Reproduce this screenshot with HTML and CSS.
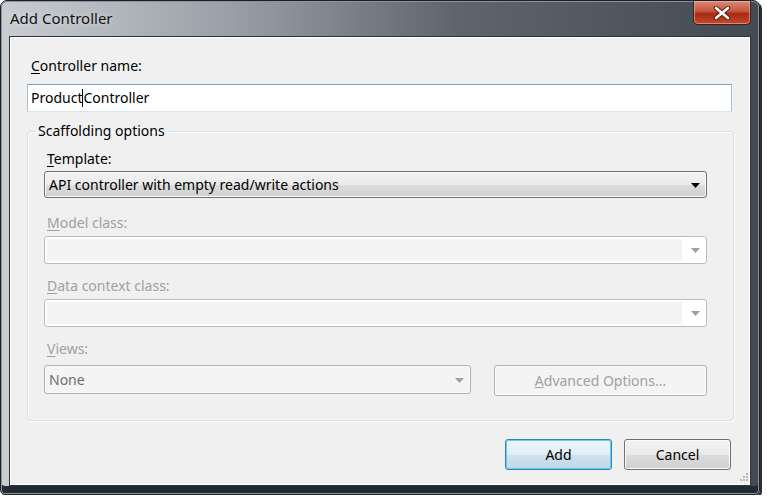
FILE: index.html
```html
<!DOCTYPE html>
<html>
<head>
<meta charset="utf-8">
<link rel="stylesheet" href="styles.css">
</head>
<body>
<div class="window">
  <div class="titlebar">
    <span class="title">Add Controller</span>
    <div class="close">
      <svg width="20" height="14" viewBox="0 0 20 14"><path d="M4 2 L16 12 M16 2 L4 12" stroke="#5a1a10" stroke-width="4.5" stroke-linecap="round"/><path d="M4 2 L16 12 M16 2 L4 12" stroke="#fff" stroke-width="2.6" stroke-linecap="round"/></svg>
    </div>
  </div>
  <div class="client">
    <label class="lbl name-lbl"><u>C</u>ontroller name:</label>
    <div class="textbox">Product<span class="caret"></span>Controller</div>
    <fieldset class="group">
      <legend>Scaffolding options</legend>
      <label class="lbl"><u>T</u>emplate:</label>
      <div class="combo active">
        <span>API controller with empty read/write actions</span>
        <svg class="arrow" width="9" height="5" viewBox="0 0 9 5"><path d="M0 0 H9 L4.5 5 Z" fill="#000"/></svg>
      </div>
      <label class="lbl dis"><u>M</u>odel class:</label>
      <div class="combo disabled">
        <span class="fill"></span>
        <svg class="arrow" width="9" height="5" viewBox="0 0 9 5"><path d="M0 0 H9 L4.5 5 Z" fill="#a0a0a0"/></svg>
      </div>
      <label class="lbl dis"><u>D</u>ata context class:</label>
      <div class="combo disabled">
        <span class="fill"></span>
        <svg class="arrow" width="9" height="5" viewBox="0 0 9 5"><path d="M0 0 H9 L4.5 5 Z" fill="#a0a0a0"/></svg>
      </div>
      <label class="lbl dis"><u>V</u>iews:</label>
      <div class="views-row">
        <div class="combo views">
          <span>None</span>
          <svg class="arrow" width="9" height="5" viewBox="0 0 9 5"><path d="M0 0 H9 L4.5 5 Z" fill="#a0a0a0"/></svg>
        </div>
        <div class="btn adv"><u>A</u>dvanced Options...</div>
      </div>
    </fieldset>
    <div class="buttons">
      <div class="btn primary">Add</div>
      <div class="btn">Cancel</div>
    </div>
    <div class="grip">
      <svg width="10" height="10" viewBox="0 0 10 10" fill="#b8b8b8"><rect x="8" y="0" width="2" height="2"/><rect x="5" y="3" width="2" height="2"/><rect x="8" y="3" width="2" height="2"/><rect x="2" y="6" width="2" height="2"/><rect x="5" y="6" width="2" height="2"/><rect x="8" y="6" width="2" height="2"/></svg>
    </div>
  </div>
</div>
</body>
</html>
```
FILE: styles.css
```css
html, body {
  margin: 0;
  padding: 0;
  background: #ffffff;
}
body {
  font-family: "Noto Sans", "Open Sans", sans-serif;
  font-size: 14px;
  color: #000;
}
.window {
  width: 760px;
  height: 495px;
  box-sizing: border-box;
  border: 1px solid #1b2027;
  border-radius: 7px 7px 5px 5px;
  background: linear-gradient(90deg, #c9cdd2 0%, #9aa0a7 30%, #5f656c 60%, #444a52 100%);
  padding: 0 8px 8px 8px;
  display: flex;
  flex-direction: column;
  box-shadow: inset 0 0 0 1px #8d939a, inset 0 -9px 0 -1px #222a34, 2px 2px 0 #2a2f36;
}
.titlebar {
  height: 35px;
  display: flex;
  align-items: flex-start;
  justify-content: space-between;
  flex-shrink: 0;
}
.title {
  margin: 7px 0 0 1px;
  font-size: 15px;
  color: #111;
  text-shadow: 0 0 6px rgba(255,255,255,0.7);
}
.close {
  width: 58px;
  height: 24px;
  margin-right: 0;
  box-sizing: border-box;
  border: 1px solid #3b2020;
  border-top: none;
  border-radius: 0 0 5px 5px;
  background: linear-gradient(180deg, #d88a78 0%, #c4553c 45%, #a82a14 55%, #c24a2c 100%);
  box-shadow: inset 0 0 0 1px rgba(255,200,190,0.5);
  display: flex;
  align-items: center;
  justify-content: center;
}
.client {
  flex: 1;
  position: relative;
  background: #f0f0f0;
  border: 1px solid #2b323b;
  box-shadow: inset 0 0 0 1px #ffffff;
  padding: 19px 18px 0 17px;
  display: flex;
  flex-direction: column;
}
.lbl {
  display: block;
  line-height: 20px;
  padding-left: 4px;
}
.lbl u { text-decoration-thickness: 1px; text-underline-offset: 2px; }
.name-lbl { margin-bottom: 8px; }
.textbox {
  height: 28px;
  box-sizing: border-box;
  border: 1px solid #abc1d6;
  border-top-color: #7a9dc2;
  border-bottom-color: #d5e3ee;
  background: #fff;
  padding-left: 3px;
  display: flex;
  align-items: center;
  line-height: 20px;
}
.caret {
  display: inline-block;
  width: 1px;
  height: 18px;
  background: #000;
}
.group {
  margin: 10px -2px 0 0;
  border: 1px solid #d5dfe5;
  border-radius: 4px;
  box-shadow: inset 1px 1px 0 #fff, 1px 1px 0 #fff;
  padding: 9px 26px 0 16px;
  height: 299px;
  box-sizing: border-box;
}
.group legend {
  padding: 0 2px;
  margin-left: -8px;
  line-height: 18px;
}
.group .lbl { padding-left: 3px; }
.combo {
  height: 28px;
  box-sizing: border-box;
  border-radius: 3px;
  display: flex;
  align-items: center;
  position: relative;
  margin-top: 2px;
  margin-bottom: 15px;
}
.combo.active {
  height: 27px;
  border: 1px solid #707070;
  background: linear-gradient(180deg, #f2f2f2 0%, #ebebeb 50%, #dddddd 51%, #cfcfcf 100%);
  box-shadow: inset 0 0 0 1px #fcfcfc;
  padding-left: 4px;
}
.combo.disabled {
  border: 1px solid #bcbcbc;
  background: #fff;
  padding: 2px;
  margin-top: 3px;
  margin-bottom: 12px;
}
.combo .fill {
  flex: 1;
  height: 100%;
  background: #f4f4f4;
  margin-right: 22px;
}
.arrow {
  position: absolute;
  right: 6px;
  top: 50%;
  margin-top: -2px;
}
.dis { color: #a0a0a0; }
.views-row {
  display: flex;
  justify-content: space-between;
  margin-top: 6px;
}
.combo.views {
  width: 427px;
  height: 29px;
  margin: 0;
  border: 1px solid #adb2b5;
  background: #f4f4f4;
  box-shadow: inset 0 0 0 1px #fafafa;
  padding-left: 4px;
  color: #6d6d6d;
}
.btn {
  height: 31px;
  box-sizing: border-box;
  border: 1px solid #707070;
  border-radius: 3px;
  background: linear-gradient(180deg, #f2f2f2 0%, #ebebeb 50%, #dddddd 51%, #cfcfcf 100%);
  box-shadow: inset 0 0 0 1px #fcfcfc;
  display: flex;
  align-items: center;
  justify-content: center;
  width: 107px;
}
.btn.adv {
  width: 213px;
  border-color: #adb2b5;
  background: #f4f4f4;
  color: #a0a0a0;
}
.btn.primary {
  border-color: #3c7fb1;
  background: linear-gradient(180deg, #eef5fa 0%, #e2eef6 50%, #cfe2ee 51%, #c0d8e8 100%);
  box-shadow: inset 0 0 0 1px #5fd0f5;
}
.buttons {
  display: flex;
  justify-content: flex-end;
  gap: 12px;
  margin-top: 18px;
  margin-right: 1px;
}
.grip {
  position: absolute;
  right: 2px;
  bottom: 2px;
  line-height: 0;
}
```
